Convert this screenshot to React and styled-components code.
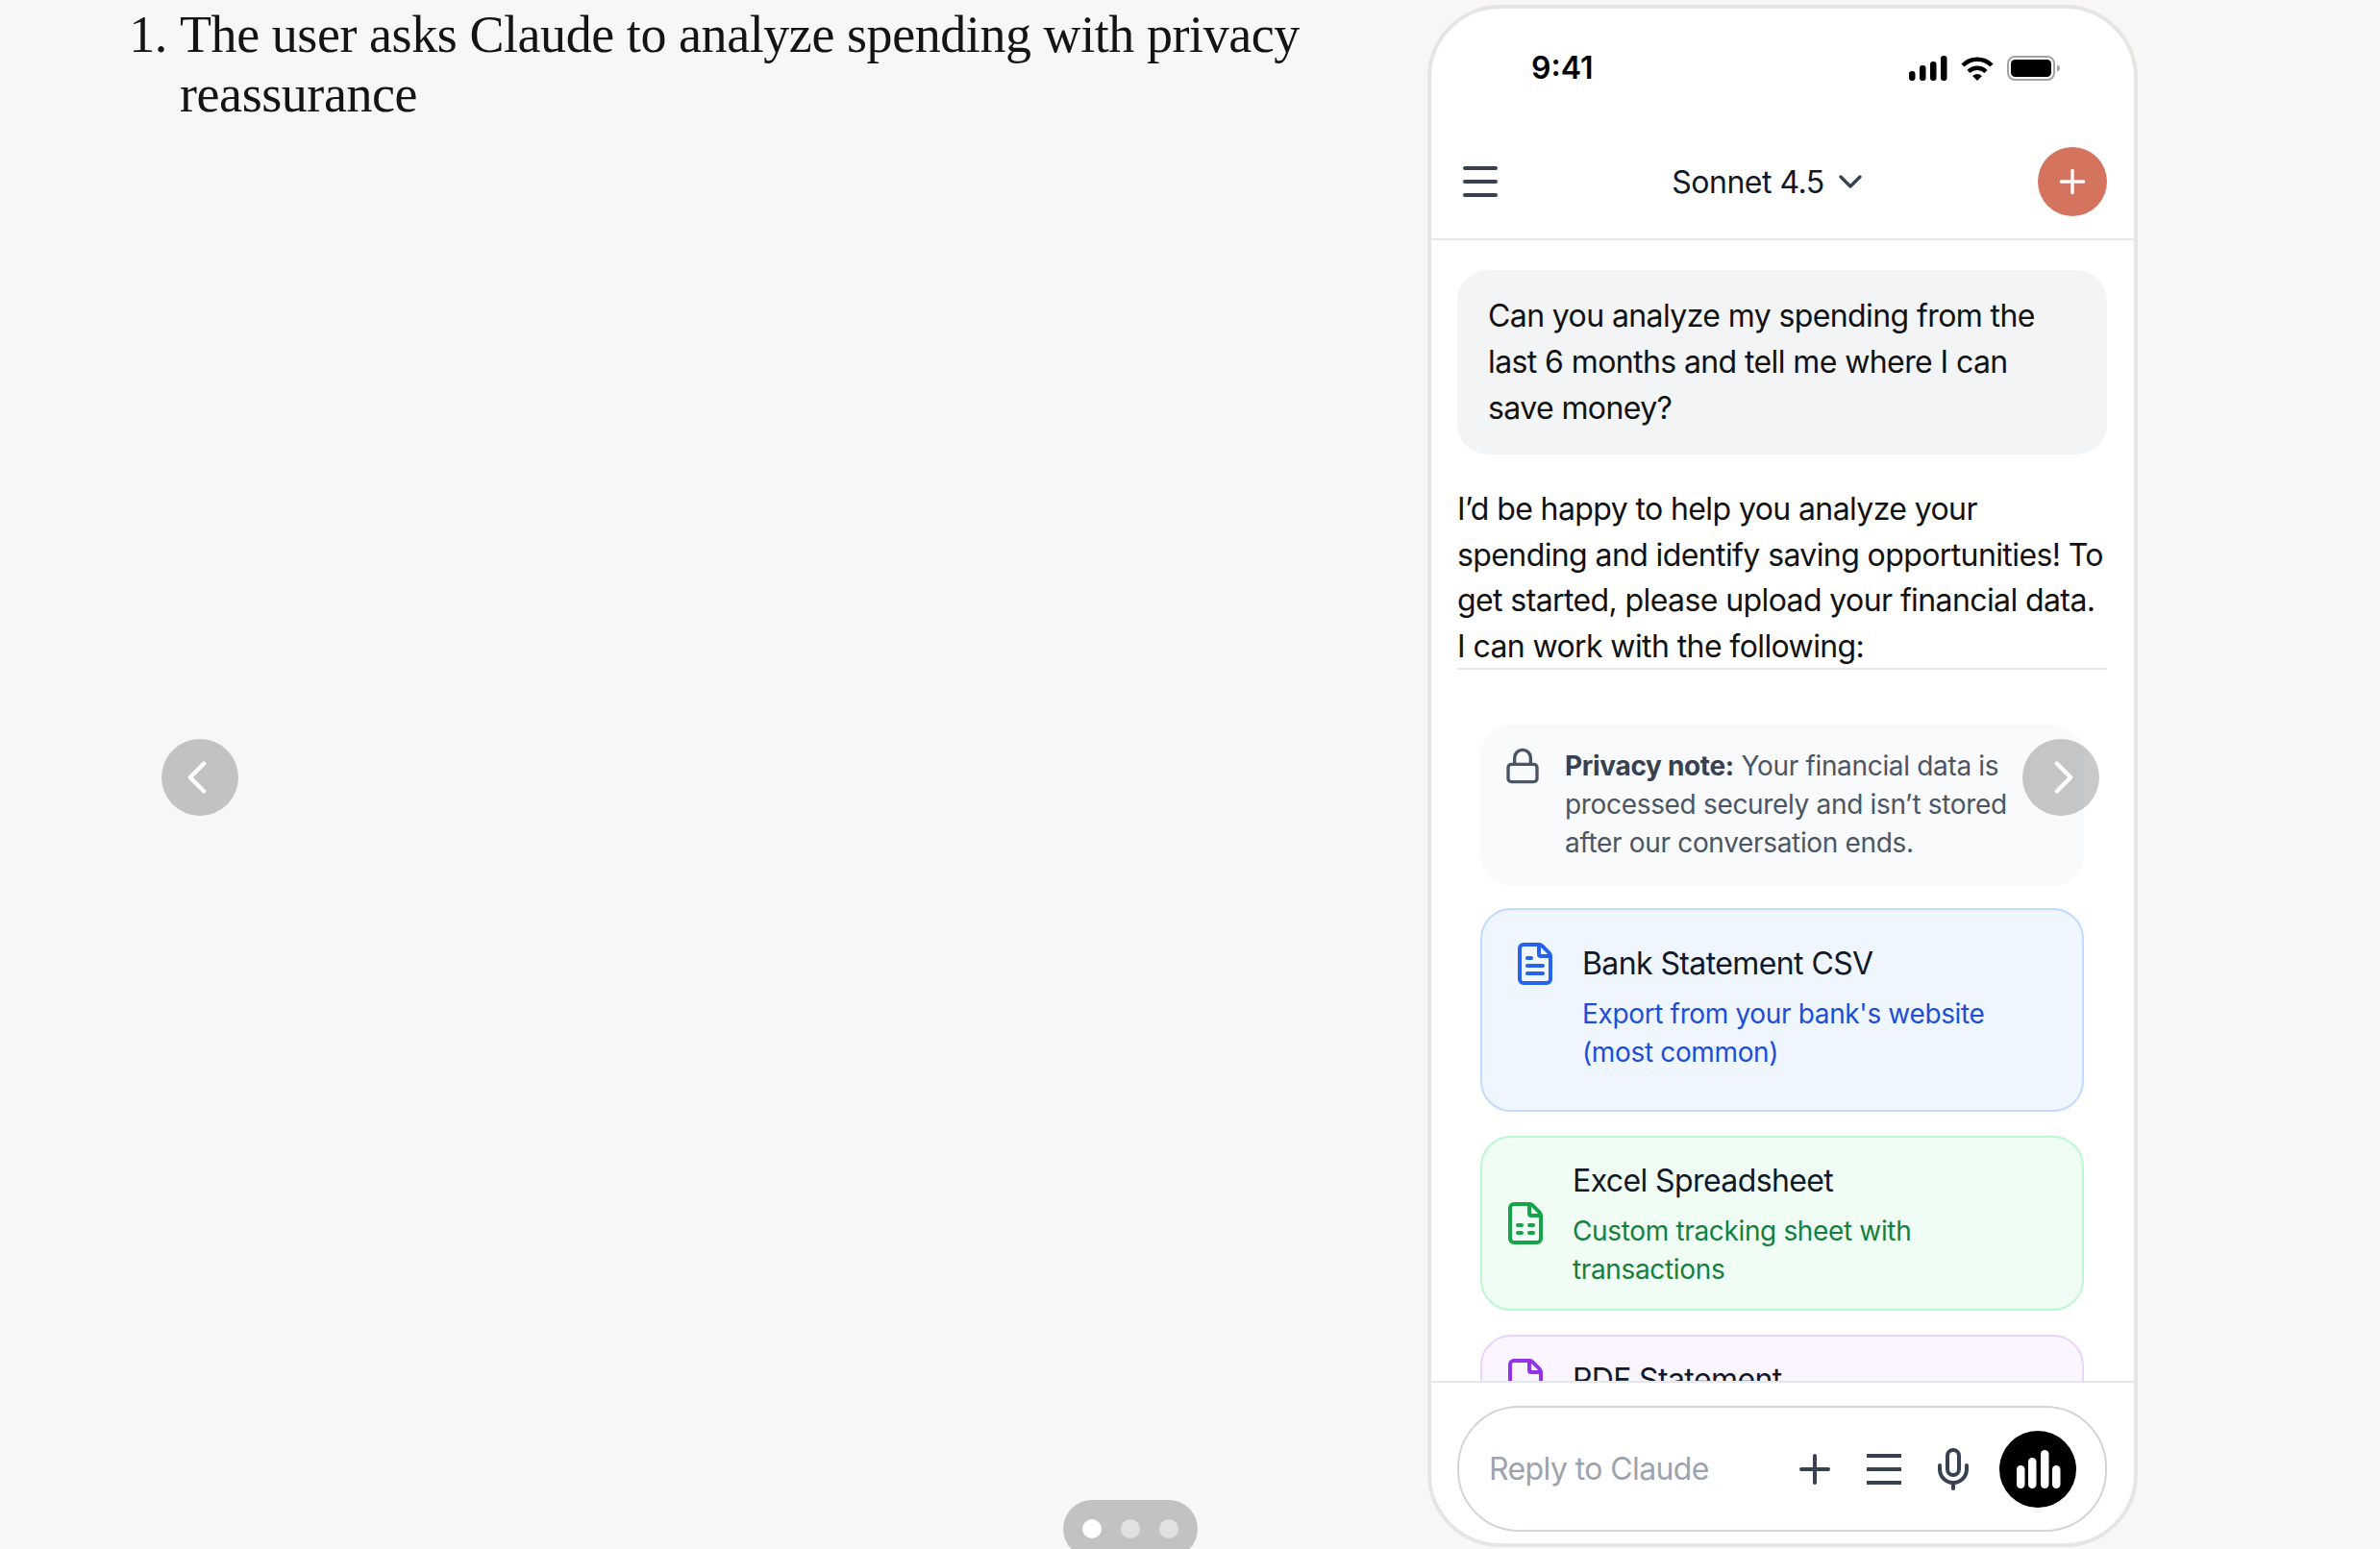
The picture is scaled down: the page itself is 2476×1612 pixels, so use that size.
import styled, { createGlobalStyle } from 'styled-components';
import { ChevronDown, ChevronLeft, ChevronRight, File, FileSpreadsheet, FileText, Lock, Menu, Mic, Plus } from 'lucide-react';

const GlobalStyle = createGlobalStyle`
  * {
    box-sizing: border-box;
  }

  html, body {
    margin: 0;
    padding: 0;
    background-color: #f8f7f5;
  }
`;

const Page = styled.div`
  position: relative;
  display: flex;
  align-items: flex-start;
  width: 2476px;
  height: 1612px;
  padding-top: 5px;
  overflow: hidden;
  background-color: #f8f7f5;
  font-family: Inter, "Liberation Sans", sans-serif;
`;

const Story = styled.div`
  flex: 0 0 1485px;
  padding-right: 60px;
`;

const Steps = styled.ol`
  margin: 0;
  padding-left: 187px;
  font-family: "Liberation Serif", serif;
  font-size: 54px;
  line-height: 62px;
  letter-spacing: -0.43px;
  color: #141413;
`;

const Phone = styled.div`
  display: flex;
  flex-direction: column;
  flex: 0 0 739px;
  height: 1605px;
  border: 4px solid #e5e5e3;
  border-radius: 76px;
  background-color: white;
  overflow: hidden;
`;

const StatusBar = styled.div`
  display: flex;
  flex: 0 0 123px;
  align-items: center;
  justify-content: space-between;
  margin-bottom: -2px;
  padding: 0 77px 0 104px;
`;

const Time = styled.span`
  font-size: 32px;
  font-weight: 600;
  color: black;
`;

const StatusIcons = styled.div`
  display: flex;
  align-items: center;
  gap: 14px;
`;

const Header = styled.header`
  display: flex;
  flex: 0 0 120px;
  align-items: center;
  justify-content: space-between;
  padding: 0 28px 0 27px;
  border-bottom: 2px solid #e5e7eb;
  color: #374151;
`;

const ModelPicker = styled.div`
  display: flex;
  align-items: center;
  gap: 7px;
  font-size: 32px;
  letter-spacing: -0.5px;
  color: #111827;

  svg {
    color: #374151;
  }
`;

const NewChat = styled.div`
  display: flex;
  align-items: center;
  justify-content: center;
  width: 72px;
  height: 72px;
  border-radius: 50%;
  background-color: #d4735e;
  color: white;
`;

const Content = styled.main`
  flex: 1;
  min-height: 0;
  padding: 31px 28px 0 27px;
  overflow: hidden;
`;

const UserBubble = styled.div`
  padding: 24px 32px;
  border-radius: 32px;
  background-color: #f3f4f6;
  font-size: 32px;
  line-height: 48px;
  letter-spacing: -0.6px;
  color: #111;
`;

const Reply = styled.p`
  margin: 33px 0 0;
  font-size: 32px;
  line-height: 47.7px;
  letter-spacing: -0.6px;
  color: #111;
`;

const Divider = styled.hr`
  height: 2px;
  margin: -2px 0 0;
  border: 0;
  background-color: #e5e7eb;
`;

const Cards = styled.div`
  display: flex;
  flex-direction: column;
  gap: 25px;
  margin: 57px 24px 0;
`;

const PrivacyNote = styled.div`
  display: flex;
  gap: 24px;
  margin-bottom: -2px;
  padding: 23px 40px 25px 24px;
  border-radius: 32px;
  background-color: #f9fafb;
  font-size: 28px;
  line-height: 40px;
  letter-spacing: -0.33px;
  color: #4b5563;

  svg {
    flex: none;
  }

  strong {
    font-weight: 700;
    color: #374151;
  }
`;

const tones = {
  blue: { bg: '#eff6ff', border: '#bfdbfe', icon: '#2563eb', text: '#1d4ed8' },
  green: { bg: '#f0fdf4', border: '#bbf7d0', icon: '#16a34a', text: '#15803d' },
  purple: { bg: '#faf5ff', border: '#e9d5ff', icon: '#9333ea', text: '#7e22ce' },
};

const SourceCard = styled.div`
  display: flex;
  flex: none;
  align-items: ${(props) => props.$align};
  gap: 25px;
  padding: ${(props) => props.$padding};
  border: 2px solid ${(props) => tones[props.$tone].border};
  border-radius: 32px;
  background-color: ${(props) => tones[props.$tone].bg};

  svg {
    flex: none;
    color: ${(props) => tones[props.$tone].icon};
  }
`;

const SourceTitle = styled.div`
  font-size: 32px;
  line-height: 48px;
  letter-spacing: -0.6px;
  color: #111827;
`;

const SourceHint = styled.div`
  margin-top: 8px;
  font-size: 28px;
  line-height: 40px;
  letter-spacing: -0.35px;
  color: ${(props) => tones[props.$tone].text};
`;

const Footer = styled.footer`
  flex: 0 0 169px;
  padding: 24px 28px 0 27px;
  border-top: 2px solid #e5e7eb;
`;

const InputBox = styled.div`
  display: flex;
  align-items: center;
  gap: 24px;
  height: 131px;
  padding: 0 30px 0 31px;
  border: 2px solid #d1d5db;
  border-radius: 64px;
  color: #374151;
`;

const Placeholder = styled.span`
  flex: 1;
  font-size: 32px;
  letter-spacing: -0.6px;
  color: #9ca3af;
`;

const VoiceButton = styled.div`
  display: flex;
  flex: none;
  width: 80px;
  height: 80px;
  border-radius: 50%;
  background-color: black;
`;

const ArrowButton = styled.div`
  position: absolute;
  top: ${(props) => props.$top}px;
  left: ${(props) => props.$left}px;
  display: flex;
  align-items: center;
  justify-content: center;
  width: 80px;
  height: 80px;
  border-radius: 50%;
  background-color: rgba(0, 0, 0, 0.21);
  color: white;

  svg {
    transform: translateX(${(props) => props.$nudge}px);
  }
`;

const Pager = styled.div`
  position: absolute;
  top: 1561px;
  left: 1106px;
  display: flex;
  align-items: center;
  gap: 20px;
  height: 60px;
  padding: 0 20px;
  border-radius: 30px;
  background-color: rgba(0, 0, 0, 0.21);
`;

const Dot = styled.span`
  width: 20px;
  height: 20px;
  border-radius: 50%;
  background-color: ${(props) => (props.$active ? 'white' : 'rgba(255, 255, 255, 0.5)')};
`;

function SignalIcon() {
  return (
    <svg width="40" height="26" viewBox="0 0 40 26" fill="black">
      <rect x="0" y="16" width="6.5" height="10" rx="3" />
      <rect x="11" y="10" width="6.5" height="16" rx="3" />
      <rect x="22" y="6" width="6.5" height="20" rx="3" />
      <rect x="33" y="0" width="6.5" height="26" rx="3" />
    </svg>
  );
}

function WifiIcon() {
  return (
    <svg width="34" height="26" viewBox="0 0 34 26" fill="none" stroke="black" strokeWidth="4.5">
      <path d="M2 10C10 1.500 24 1.500 32 10" />
      <path d="M8 16.500C13 11.500 21 11.500 26 16.500" />
      <path d="M12 21Q17 17 22 21L17 26Z" fill="black" stroke="none" />
    </svg>
  );
}

function BatteryIcon() {
  return (
    <svg width="55" height="26" viewBox="0 0 55 26">
      <rect x="1" y="1" width="48" height="24" rx="7" fill="none" stroke="#a3a3a3" strokeWidth="2" />
      <rect x="4" y="4" width="42" height="18" rx="4.500" fill="black" />
      <path d="M52 9.500C54 10 55 11.500 55 13C55 14.500 54 16 52 16.500Z" fill="#a3a3a3" />
    </svg>
  );
}

function VoiceBars() {
  return (
    <svg width="80" height="80" viewBox="0 0 80 80" fill="white">
      <rect x="18" y="36" width="8.500" height="24" rx="4.250" />
      <rect x="30" y="28" width="8.500" height="32" rx="4.250" />
      <rect x="43" y="20" width="8.500" height="40" rx="4.250" />
      <rect x="55" y="36" width="8.500" height="24" rx="4.250" />
    </svg>
  );
}

export default function App() {
  return (
    <Page>
      <GlobalStyle />
      <Story>
        <Steps>
          <li>The user asks Claude to analyze spending with privacy reassurance</li>
        </Steps>
      </Story>

      <Phone>
        <StatusBar>
          <Time>9:41</Time>
          <StatusIcons>
            <SignalIcon />
            <WifiIcon />
            <BatteryIcon />
          </StatusIcons>
        </StatusBar>

        <Header>
          <Menu size={48} strokeWidth={2} />
          <ModelPicker>
            Sonnet 4.5
            <ChevronDown size={40} strokeWidth={2} />
          </ModelPicker>
          <NewChat>
            <Plus size={40} strokeWidth={2} />
          </NewChat>
        </Header>

        <Content>
          <UserBubble>
            Can you analyze my spending from the last 6 months and tell me where I can save money?
          </UserBubble>
          <Reply>
            I’d be happy to help you analyze your spending and identify saving opportunities! To get
            started, please upload your financial data. I can work with the following:
          </Reply>
          <Divider />
          <Cards>
            <PrivacyNote>
              <Lock size={40} strokeWidth={2} />
              <div>
                <strong>Privacy note:</strong> Your financial data is processed securely and isn’t
                stored after our conversation ends.
              </div>
            </PrivacyNote>

            <SourceCard $tone="blue" $align="flex-start" $padding="32px 31px 40px 31px">
              <FileText size={48} strokeWidth={2} />
              <div>
                <SourceTitle>Bank Statement CSV</SourceTitle>
                <SourceHint $tone="blue">Export from your bank's website (most common)</SourceHint>
              </div>
            </SourceCard>

            <SourceCard $tone="green" $align="center" $padding="21px 61px 21px 21px">
              <FileSpreadsheet size={48} strokeWidth={2} />
              <div>
                <SourceTitle>Excel Spreadsheet</SourceTitle>
                <SourceHint $tone="green">Custom tracking sheet with transactions</SourceHint>
              </div>
            </SourceCard>

            <SourceCard $tone="purple" $align="flex-start" $padding="21px 61px 21px 21px">
              <File size={48} strokeWidth={2} />
              <SourceTitle>PDF Statement</SourceTitle>
            </SourceCard>
          </Cards>
        </Content>

        <Footer>
          <InputBox>
            <Placeholder>Reply to Claude</Placeholder>
            <Plus size={48} strokeWidth={2} />
            <Menu size={48} strokeWidth={2} strokeLinecap="square" />
            <Mic size={48} strokeWidth={2} />
            <VoiceButton>
              <VoiceBars />
            </VoiceButton>
          </InputBox>
        </Footer>
      </Phone>

      <ArrowButton $top={769} $left={168} $nudge={-3}>
        <ChevronLeft size={58} strokeWidth={1.8} />
      </ArrowButton>
      <ArrowButton $top={769} $left={2104} $nudge={3}>
        <ChevronRight size={58} strokeWidth={1.8} />
      </ArrowButton>

      <Pager>
        <Dot $active />
        <Dot />
        <Dot />
      </Pager>
    </Page>
  );
}
